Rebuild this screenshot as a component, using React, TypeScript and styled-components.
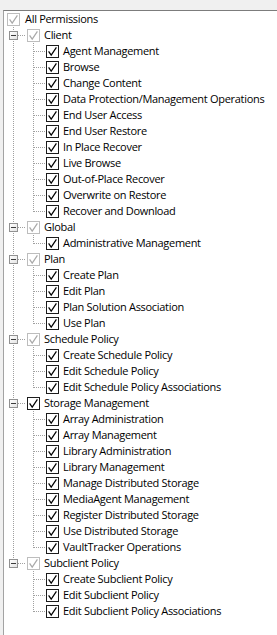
import styled, { createGlobalStyle } from "styled-components";

// TYPES
interface Node {
    label: string;
    muted?: boolean;
    children?: Node[];
}

const leaves = (labels: string[]): Node[] => labels.map((label) => ({ label }));

const TREE: Node = {
    label: "All Permissions",
    muted: true,
    children: [
        {
            label: "Client",
            muted: true,
            children: leaves([
                "Agent Management",
                "Browse",
                "Change Content",
                "Data Protection/Management Operations",
                "End User Access",
                "End User Restore",
                "In Place Recover",
                "Live Browse",
                "Out-of-Place Recover",
                "Overwrite on Restore",
                "Recover and Download",
            ]),
        },
        {
            label: "Global",
            muted: true,
            children: leaves(["Administrative Management"]),
        },
        {
            label: "Plan",
            muted: true,
            children: leaves([
                "Create Plan",
                "Edit Plan",
                "Plan Solution Association",
                "Use Plan",
            ]),
        },
        {
            label: "Schedule Policy",
            muted: true,
            children: leaves([
                "Create Schedule Policy",
                "Edit Schedule Policy",
                "Edit Schedule Policy Associations",
            ]),
        },
        {
            label: "Storage Management",
            children: leaves([
                "Array Administration",
                "Array Management",
                "Library Administration",
                "Library Management",
                "Manage Distributed Storage",
                "MediaAgent Management",
                "Register Distributed Storage",
                "Use Distributed Storage",
                "VaultTracker Operations",
            ]),
        },
        {
            label: "Subclient Policy",
            muted: true,
            children: leaves([
                "Create Subclient Policy",
                "Edit Subclient Policy",
                "Edit Subclient Policy Associations",
            ]),
        },
    ],
};

const DOTS = "#a0a0a0";

const GlobalStyle = createGlobalStyle`
    html, body {
        margin: 0;
        padding: 0;
        background: #f0f0f0;
        overflow: hidden;
    }
`;

const PANEL = styled.div`
    margin: 10px 0 0 3px;
    min-height: calc(100vh - 10px);
    background: #ffffff;
    border-top: 1px solid #7c7c7c;
    border-left: 1px solid #a3a3a3;
    font-family: "Open Sans", "Noto Sans", sans-serif;
    font-size: 11px;
    letter-spacing: -0.3px;
    color: #000000;
`;

const ROW = styled.div`
    display: flex;
    align-items: center;
    height: 16px;
    white-space: nowrap;
`;

const GUIDE = styled.div<{ $offset: number; $line: boolean }>`
    position: relative;
    flex: 0 0 19px;
    height: 16px;

    &::before {
        content: "";
        display: ${(p) => (p.$line ? "block" : "none")};
        position: absolute;
        left: ${(p) => p.$offset}px;
        top: 0;
        width: 1px;
        height: 16px;
        background: repeating-linear-gradient(to bottom, ${DOTS} 0 1px, transparent 1px 2px);
    }
`;

const CONNECTOR = styled.div<{ $offset: number; $last: boolean }>`
    position: relative;
    flex: 0 0 23px;
    height: 16px;

    &::before {
        content: "";
        position: absolute;
        left: ${(p) => p.$offset}px;
        top: 0;
        width: 1px;
        height: ${(p) => (p.$last ? 9 : 16)}px;
        background: repeating-linear-gradient(to bottom, ${DOTS} 0 1px, transparent 1px 2px);
    }

    &::after {
        content: "";
        position: absolute;
        left: ${(p) => p.$offset + 1}px;
        right: 1px;
        top: 8px;
        height: 1px;
        background: repeating-linear-gradient(to right, ${DOTS} 0 1px, transparent 1px 2px);
    }
`;

const EXPANDER = styled.div<{ $offset: number }>`
    position: absolute;
    z-index: 1;
    left: ${(p) => p.$offset - 4}px;
    top: 4px;
    width: 7px;
    height: 7px;
    border: 1px solid #919191;
    background: linear-gradient(to bottom right, #ffffff, #e4e4e4);
    display: flex;
    align-items: center;
    justify-content: center;

    &::before {
        content: "";
        width: 5px;
        height: 1px;
        background: #3c3c3c;
    }
`;

const ROOTPAD = styled.div`
    flex: 0 0 3px;
`;

const CHECK = styled.svg`
    flex: 0 0 13px;
    display: block;
`;

const LABEL = styled.span<{ $root?: boolean }>`
    margin-left: ${(p) => (p.$root ? 5 : 4)}px;
    line-height: 16px;
`;

const CheckBox = ({ muted }: { muted?: boolean }) => {
    const edge = muted ? "#bdbdbd" : "#1c1c1c";
    const tick = muted ? "#a9a9a9" : "#000000";
    return (
        <CHECK width="13" height="13" viewBox="0 0 13 13">
            <rect x="0.5" y="0.5" width="12" height="12" fill="#ffffff" stroke={edge} />
            <path d="M2.6 6.4 L5.2 10.2 L10.4 2.4" fill="none" stroke={tick} strokeWidth="1.2" />
        </CHECK>
    );
};

// one guide column per ancestor level; continues the line when that ancestor is not last
const renderNode = (
    node: Node,
    depth: number,
    trail: boolean[],
    last: boolean,
    out: JSX.Element[]
) => {
    const offset = (level: number) => (level === 1 ? 9 : 10);

    out.push(
        <ROW key={out.length}>
            {depth === 0 && <ROOTPAD />}
            {trail.map((more, i) => (
                <GUIDE key={i} $offset={offset(i + 1)} $line={more} />
            ))}
            {depth > 0 && (
                <CONNECTOR $offset={offset(depth)} $last={last}>
                    {node.children && <EXPANDER $offset={offset(depth)} />}
                </CONNECTOR>
            )}
            <CheckBox muted={node.muted} />
            <LABEL $root={depth === 0}>{node.label}</LABEL>
        </ROW>
    );

    const kids = node.children ?? [];
    kids.forEach((child, i) => {
        const nextTrail = depth === 0 ? [] : [...trail, !last];
        renderNode(child, depth + 1, nextTrail, i === kids.length - 1, out);
    });
};

const App = () => {
    const rows: JSX.Element[] = [];
    renderNode(TREE, 0, [], true, rows);

    return (
        <>
            <GlobalStyle />
            <PANEL>{rows}</PANEL>
        </>
    );
};

export default App;
